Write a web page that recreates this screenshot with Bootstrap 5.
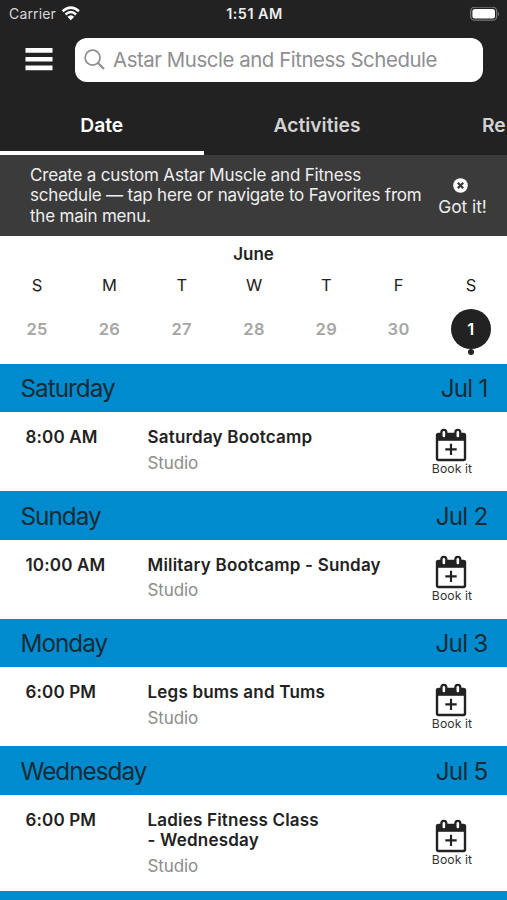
<!DOCTYPE html>
<html lang="en">
<head>
<meta charset="utf-8">
<meta name="viewport" content="width=device-width, initial-scale=1">
<title>Schedule</title>
<link href="https://cdn.jsdelivr.net/npm/bootstrap@5.3.0/dist/css/bootstrap.min.css" rel="stylesheet">
<style>
body{font-family:Inter,"Liberation Sans",sans-serif;color:#222;background:#fff;height:900px;overflow:hidden;width:507px}
.top-area{background:#222;height:155px}
.status-row{height:28px;padding:0 7px 0 9px;font-size:14px;color:#d8d8d8;display:grid;grid-template-columns:1fr auto 1fr}
.carrier-text{letter-spacing:.15px;margin-top:-1px}
.clock-text{font-weight:600;color:#eee;font-size:14.4px;letter-spacing:.5px}
.search-row{height:63px;padding:10px 24px 0 25px}
.search-box{height:43.5px;border-radius:12px;background:#fff;color:#8e8e93;font-size:20.4px;margin-left:22px;padding-left:9px;letter-spacing:-.44px}
.search-box span{padding-top:2px}
.tab-row{height:64px;color:#d2d2d2;font-weight:600;font-size:19.3px;overflow:hidden}
.tab-row .nav-link{color:inherit;padding:9px 0 0;flex:none;border-bottom:4px solid transparent;display:flex;align-items:center;justify-content:center}
.tab-row .nav-link.active{color:#fff;border-color:#fff}
.tab-a{width:203.5px}.tab-b{width:227px}.tab-row .tab-c{padding-left:51.5px}
.tip{background:#3b3b3b;color:#eee;height:81px;padding:0 20px 0 30px;font-size:17px;line-height:20.4px;letter-spacing:-.2px}
.got{font-size:17.4px;width:49px;padding-top:4px}
.got svg{margin-right:4px}
.got span{letter-spacing:-.05px}
.cal{height:127.5px}
.month-name{font-size:17px;font-weight:600;line-height:20px;padding-top:7.5px}
.week{display:grid;grid-template-columns:repeat(7,72.3px);margin-left:1px;text-align:center;font-size:16.5px}
.week-names{height:42px;line-height:42px}
.week-days{height:46px;line-height:46px;color:#a5a5a5;font-weight:600;letter-spacing:.35px}
.picked{width:40px;height:40px;line-height:40px;background:#222;color:#fff;margin:3px auto 0}
.dot{width:6px;height:6px;background:#222;margin:.5px auto 0}
.day-head{height:48.5px;background:#008bcf;color:#182c36;font-size:24.3px;padding:0 19.5px 0 20.5px;letter-spacing:-1px}
.day-head span:last-child{letter-spacing:-.8px}
.day-head span{padding-top:1px}
.slot{height:79px;padding:15px 0 0 25.5px;font-size:17px;line-height:20.4px}
.slot.tall{height:96.5px}
.slot-time{width:122px;font-weight:600;letter-spacing:.15px}
.slot-name{font-weight:600;letter-spacing:.2px}
.slot-room{color:#8c8c8c;padding-top:5.5px;letter-spacing:-.1px}
.book{width:60px;right:25px;font-size:12.2px;line-height:14px;color:#333;letter-spacing:.1px}
.book svg{margin-right:2px}
svg{display:block;flex:none}
</style>
<script src="https://cdn.jsdelivr.net/npm/bootstrap@5.3.0/dist/js/bootstrap.bundle.min.js"></script>
</head>
<body>
<svg width="0" height="0" class="d-none">
  <symbol id="calendar-plus" viewBox="0 0 32 34">
    <rect x="2" y="6" width="28" height="26" rx="1.5" fill="#fff" stroke="#222" stroke-width="2.4"/>
    <path d="M2 6h28v6.8H2z" fill="#222"/>
    <rect x="6.4" y="1.8" width="4.9" height="8.7" rx="2.4" fill="#fff" stroke="#222" stroke-width="2.3"/>
    <rect x="20.4" y="1.8" width="4.9" height="8.7" rx="2.4" fill="#fff" stroke="#222" stroke-width="2.3"/>
    <path d="M16 15.7v11.4M10.3 21.4h11.4" stroke="#222" stroke-width="2.2"/>
  </symbol>
</svg>
<header class="top-area">
  <div class="status-row align-items-center">
    <div class="d-flex align-items-center"><span class="carrier-text">Carrier</span>
      <svg class="ms-1" width="20" height="16" viewBox="0 0 20 16" fill="none" stroke="#fff" stroke-width="2.5"><path d="M2.6 5.2Q10.8-2 19 5.2M5.5 8.5Q10.8 3.6 16.1 8.5"/><path d="M7.4 10.8Q10.8 7.8 14.2 10.8L10.8 14.3z" fill="#fff" stroke="none"/></svg>
    </div>
    <div class="clock-text">1:51 AM</div>
    <svg class="ms-auto" width="30" height="15" viewBox="0 0 30 15"><rect x=".7" y=".2" width="26" height="13" rx="4" fill="none" stroke="#777" stroke-width="1.3"/><rect x="2.4" y="1.9" width="22.6" height="9.6" rx="2.5" fill="#fff"/><path d="M28.2 4.5v4.8q2-2.4 0-4.8" fill="#777"/></svg>
  </div>
  <div class="search-row d-flex">
    <svg width="28" height="43" viewBox="0 0 28 43"><path d="M.5 12.4h27M.5 21.3h27M.5 29.9h27" stroke="#fff" stroke-width="4.6"/></svg>
    <div class="search-box flex-grow-1 d-flex align-items-center">
      <svg class="me-2" width="21" height="21" viewBox="0 0 21 21" fill="none" stroke="#8e8e93" stroke-width="1.7"><circle cx="8.6" cy="8.6" r="7.5"/><path d="M14 14l6 6" stroke-width="2.3"/></svg>
      <span>Astar Muscle and Fitness Schedule</span>
    </div>
  </div>
  <nav class="tab-row nav flex-nowrap">
    <a class="nav-link active tab-a">Date</a><a class="nav-link tab-b">Activities</a><a class="nav-link tab-c">Re</a>
  </nav>
</header>
<section class="tip d-flex align-items-center justify-content-between">
  <div>Create a custom Astar Muscle and Fitness<br>schedule — tap here or navigate to Favorites from<br>the main menu.</div>
  <div class="got d-flex flex-column align-items-center text-nowrap">
    <svg class="mb-1" width="15" height="15" viewBox="0 0 15 15"><circle cx="7.5" cy="7.5" r="7.3" fill="#fff"/><path d="M4.8 4.8l5.4 5.4M10.2 4.8l-5.4 5.4" stroke="#3b3b3b" stroke-width="2.3"/></svg>
    <span>Got it!</span>
  </div>
</section>
<section class="cal">
  <div class="month-name text-center">June</div>
  <div class="week week-names"><span>S</span><span>M</span><span>T</span><span>W</span><span>T</span><span>F</span><span>S</span></div>
  <div class="week week-days"><span>25</span><span>26</span><span>27</span><span>28</span><span>29</span><span>30</span>
    <div><div class="picked rounded-circle">1</div><div class="dot rounded-circle"></div></div></div>
</section>
<main>
  <div class="day-head d-flex justify-content-between align-items-center"><span>Saturday</span><span>Jul 1</span></div>
  <div class="slot d-flex position-relative"><div class="slot-time">8:00 AM</div><div><div class="slot-name">Saturday Bootcamp</div><div class="slot-room">Studio</div></div>
    <div class="book position-absolute top-50 translate-middle-y d-flex flex-column align-items-center"><svg width="32" height="34"><use href="#calendar-plus"/></svg><span>Book it</span></div></div>
  <div class="day-head d-flex justify-content-between align-items-center"><span>Sunday</span><span>Jul 2</span></div>
  <div class="slot d-flex position-relative"><div class="slot-time">10:00 AM</div><div><div class="slot-name">Military Bootcamp - Sunday</div><div class="slot-room">Studio</div></div>
    <div class="book position-absolute top-50 translate-middle-y d-flex flex-column align-items-center"><svg width="32" height="34"><use href="#calendar-plus"/></svg><span>Book it</span></div></div>
  <div class="day-head d-flex justify-content-between align-items-center"><span>Monday</span><span>Jul 3</span></div>
  <div class="slot d-flex position-relative"><div class="slot-time">6:00 PM</div><div><div class="slot-name">Legs bums and Tums</div><div class="slot-room">Studio</div></div>
    <div class="book position-absolute top-50 translate-middle-y d-flex flex-column align-items-center"><svg width="32" height="34"><use href="#calendar-plus"/></svg><span>Book it</span></div></div>
  <div class="day-head d-flex justify-content-between align-items-center"><span>Wednesday</span><span>Jul 5</span></div>
  <div class="slot tall d-flex position-relative"><div class="slot-time">6:00 PM</div><div><div class="slot-name">Ladies Fitness Class<br>- Wednesday</div><div class="slot-room">Studio</div></div>
    <div class="book position-absolute top-50 translate-middle-y d-flex flex-column align-items-center"><svg width="32" height="34"><use href="#calendar-plus"/></svg><span>Book it</span></div></div>
  <div class="day-head"></div>
</main>
</body>
</html>
